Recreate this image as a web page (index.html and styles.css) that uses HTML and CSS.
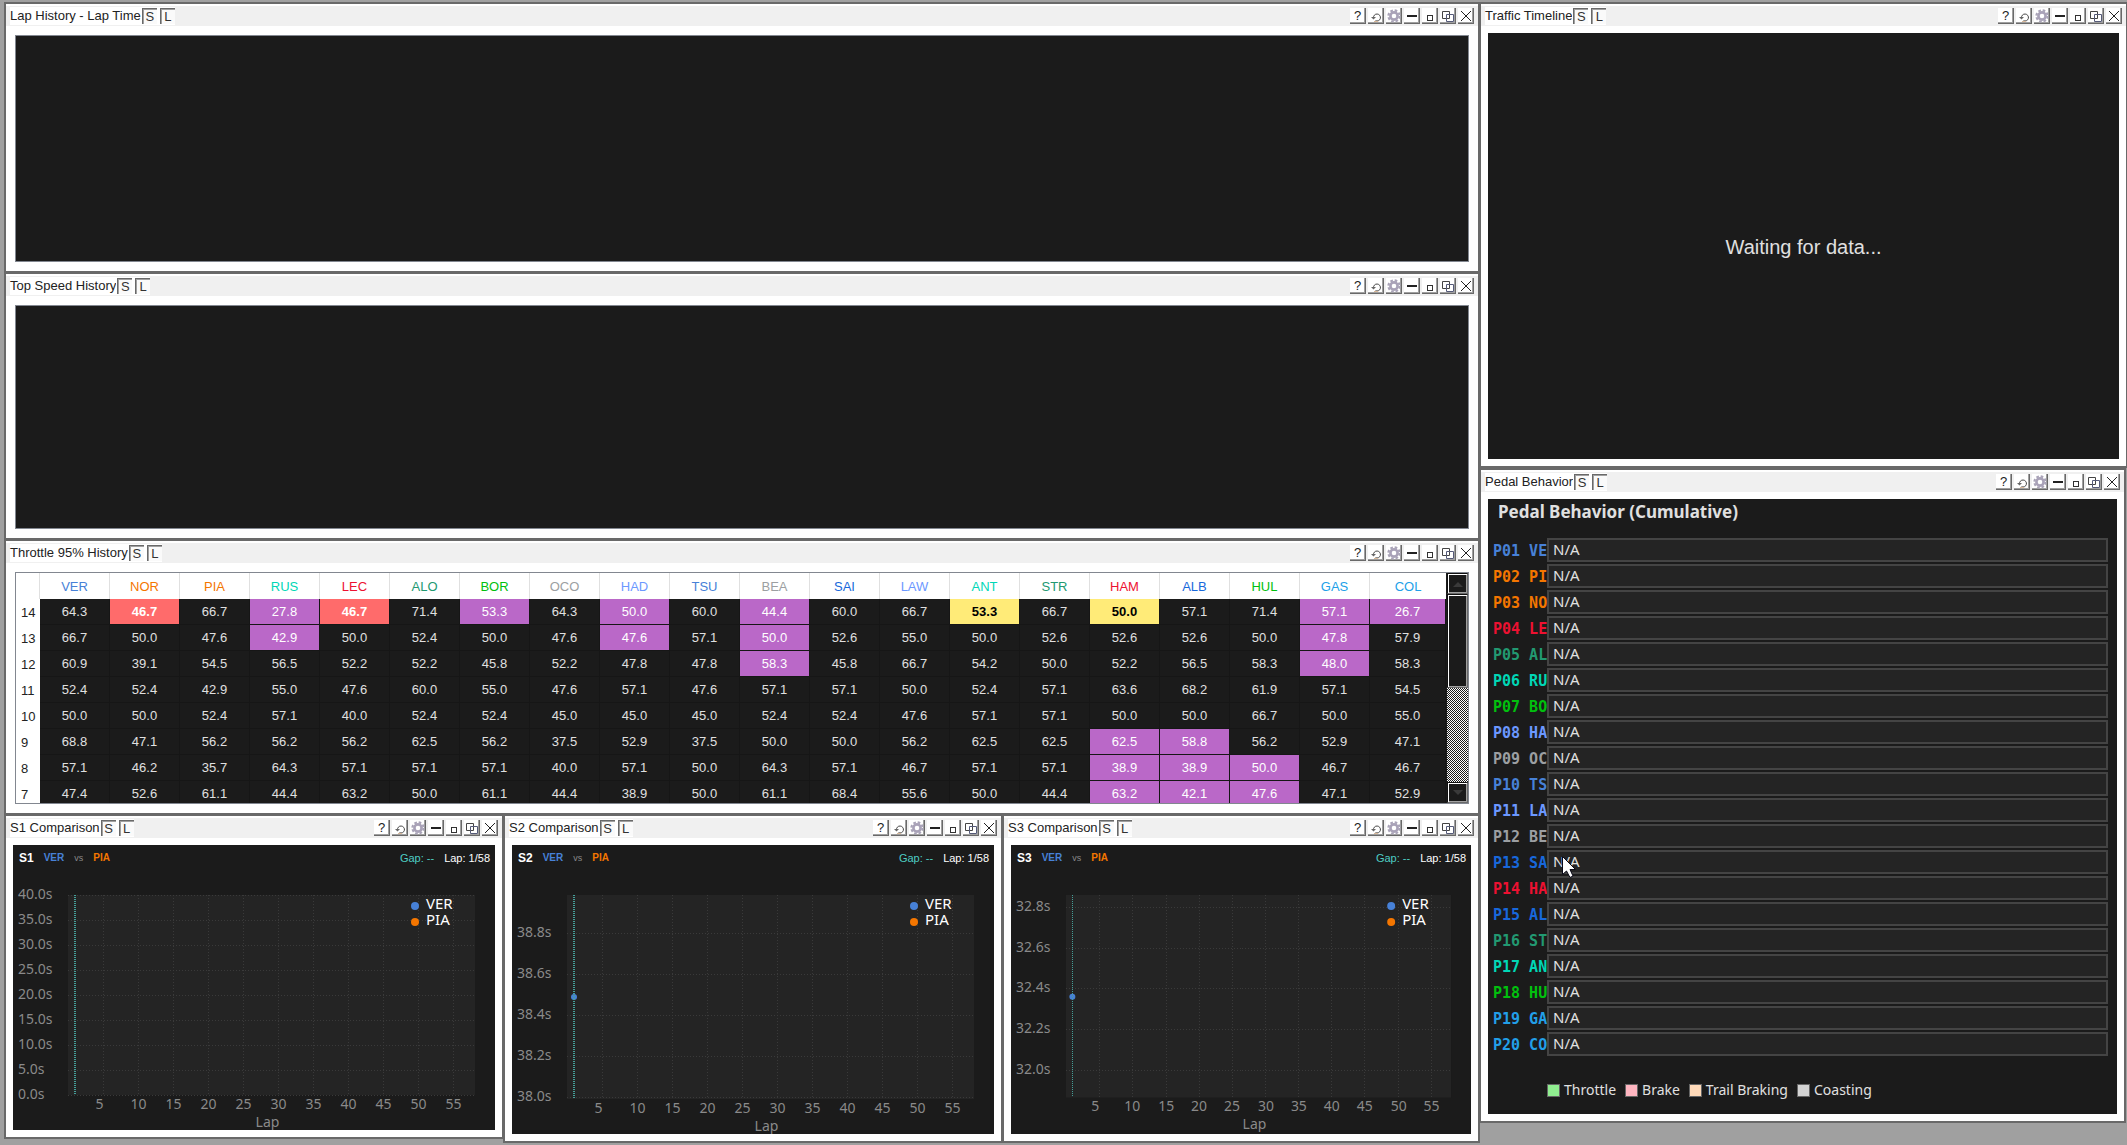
FILE: index.html
```html
<!DOCTYPE html>
<html lang="en">
<head>
<meta charset="utf-8">
<title>Race Telemetry Workspace</title>
<link rel="stylesheet" href="styles.css">
</head>
<body>
<svg class="sprite" aria-hidden="true">
  <symbol id="i-reset" viewBox="0 0 14 14"><path d="M4.500 9a3.500 3.500 0 1 1 2 2.700" fill="none" stroke="#444"/><path d="M2 8h5l-2.500 2.500z" fill="#666"/><path d="M5 12.500h4" stroke="#d8b89a"/></symbol>
  <symbol id="i-gear" viewBox="0 0 14 14"><circle cx="7" cy="7" r="3.600" fill="none" stroke="#a9a2b8" stroke-width="2.600"/><circle cx="7" cy="7" r="5.600" fill="none" stroke="#aaa4b8" stroke-width="2.200" stroke-dasharray="2.600 1.798"/></symbol>
  <symbol id="i-min" viewBox="0 0 14 14"><path d="M2 7h10" stroke="#222" stroke-width="2"/></symbol>
  <symbol id="i-max" viewBox="0 0 14 14"><rect x="4.500" y="6.500" width="5" height="5" fill="none" stroke="#333"/></symbol>
  <symbol id="i-float" viewBox="0 0 14 14"><path d="M1.500 2.500h7v7h-7z" fill="none" stroke="#444"/><path d="M5.500 5.500h7v7h-7z" fill="none" stroke="#555a78"/></symbol>
  <symbol id="i-close" viewBox="0 0 14 14"><path d="M2 2l10 10M12 2L2 12" stroke="#222" fill="none"/></symbol>
</svg>

<main class="desktop">
  <div class="column column-left">
    <section class="window">
      <header class="titlebar"><h2>Lap History - Lap Time</h2></header>
      <div class="pane pane-framed"></div>
    </section>
    <section class="window">
      <header class="titlebar"><h2>Top Speed History</h2></header>
      <div class="pane pane-framed"></div>
    </section>
    <section class="window">
      <header class="titlebar"><h2>Throttle 95% History</h2></header>
      <div class="pane pane-framed history">
        <div class="history-view"><table id="history"></table></div>
        <div class="scrollbar">
          <button type="button" class="sb-arrow" aria-label="Scroll up"><svg viewBox="0 0 10 6"><path d="M0 6l5-5 5 5z"/></svg></button>
          <div class="sb-thumb"></div>
          <div class="sb-track"></div>
          <button type="button" class="sb-arrow" aria-label="Scroll down"><svg viewBox="0 0 10 6"><path d="M0 0l5 5 5-5z"/></svg></button>
        </div>
      </div>
    </section>
    <div class="sectors">
      <section class="window window-short">
        <header class="titlebar"><h2>S1 Comparison</h2></header>
        <div class="pane chart" data-sector="S1"></div>
      </section>
      <section class="window">
        <header class="titlebar"><h2>S2 Comparison</h2></header>
        <div class="pane chart" data-sector="S2"></div>
      </section>
      <section class="window">
        <header class="titlebar"><h2>S3 Comparison</h2></header>
        <div class="pane chart" data-sector="S3"></div>
      </section>
    </div>
  </div>

  <div class="column column-right">
    <section class="window">
      <header class="titlebar"><h2>Traffic Timeline</h2></header>
      <div class="pane waiting"><p>Waiting for data...</p></div>
    </section>
    <section class="window window-narrow">
      <header class="titlebar"><h2>Pedal Behavior</h2></header>
      <div class="pane pedals">
        <h3>Pedal Behavior (Cumulative)</h3>
        <ol class="pedal-list" id="pedals"></ol>
        <ul class="pedal-legend">
          <li><span class="swatch throttle"></span>Throttle</li>
          <li><span class="swatch brake"></span>Brake</li>
          <li><span class="swatch trail"></span>Trail Braking</li>
          <li><span class="swatch coast"></span>Coasting</li>
        </ul>
      </div>
    </section>
  </div>
</main>
<script src="script.js"></script>
</body>
</html>
```
FILE: styles.css
```css
* { box-sizing: border-box; }

body {
  margin: 0;
  background: #a0a0a0;
  color: #222;
  font: 13px/18px "Liberation Sans", Arial, sans-serif;
}

h2, h3, p, ol, ul { margin: 0; padding: 0; font-weight: normal; list-style: none; }
button { padding: 0; margin: 0; font: inherit; color: inherit; border-radius: 0; }
.sprite { display: none; }

/* Workspace */
.desktop {
  display: grid;
  grid-template-columns: 1472fr 645fr;
  column-gap: 3px;
  height: 100vh;
  min-height: 900px;
  padding: 4px 1px 0 6px;
}
.column { display: grid; min-width: 0; min-height: 0; }
.column-left { grid-template-rows: 267fr 264fr 272fr 325fr; gap: 3px; padding-bottom: 4px; }
.column-right { grid-template-rows: 462fr 651fr; gap: 4px; padding-bottom: 24px; }
.sectors { display: grid; grid-template-columns: 496fr 496fr 474fr; gap: 3px; min-height: 0; }

.window {
  display: flex;
  flex-direction: column;
  min-width: 0;
  min-height: 0;
  padding-top: 2px;
  background: #fff;
  box-shadow: 0 0 0 2px #696969;
}
.window-short { margin-bottom: 4px; }
.window-narrow { margin-right: 2px; }

/* Title bar */
.titlebar {
  display: flex;
  align-items: center;
  flex: none;
  height: 20px;
  padding: 0 4px;
  background: #f0f0f0;
}
.titlebar h2 { font-size: 13px; line-height: 18px; background: #fff; }
.toggles { display: flex; gap: 3px; background: #fff; padding: 1px 0 1px 1px; }
.toggle {
  width: 15px;
  height: 16px;
  line-height: 15px;
  background: #fafafa;
  border: 0 solid #696969;
  border-width: 1px 0 0 1px;
  box-shadow: inset 1px 1px #a0a0a0;
  color: #333;
}
.tools { display: flex; gap: 2px; margin-left: auto; }
.tool {
  display: flex;
  align-items: center;
  justify-content: center;
  width: 16px;
  height: 16px;
  background: #fff;
  border: 0 solid #696969;
  border-width: 0 1px 1px 0;
  box-shadow: inset -1px -1px #a0a0a0;
}
.tool svg { width: 14px; height: 14px; }

/* Panes */
.pane { flex: 1; min-height: 0; margin: 7px; background: #1b1b1b; overflow: hidden; }
.pane-framed { margin: 9px; border: 1px solid #828790; }
.waiting { display: flex; align-items: center; justify-content: center; }
.waiting p { font-size: 20px; line-height: 24px; padding-top: 2px; color: #e0e0e0; }

/* Throttle history */
.history { display: flex; }
.history-view { flex: 1; overflow: hidden; border-right: 1px solid #1b1b1b; }
table { width: 100%; table-layout: fixed; border-collapse: separate; border-spacing: 0; }
th, td {
  height: 26px;
  padding: 0;
  text-align: center;
  font-weight: normal;
  line-height: 18px;
  border: 0 solid #161616;
  border-width: 0 1px 1px 0;
}
thead th { background: #fff; border-color: #e0e0e0; border-bottom: 0; width: 70px; padding-top: 2px; }
thead .corner { width: 24px; }
thead th:last-child { width: auto; border-right: 0; }
tbody th { background: #fff; text-align: left; padding: 2px 0 0 5px; border-color: #fff; }
td { color: #e0e0e0; }
td.best { background: #ba68c8; color: #fff; }
td.low { background: #ff6b6b; color: #fff; font-weight: bold; }
td.mid { background: #ffeb78; color: #000; font-weight: bold; }

.scrollbar { display: flex; flex-direction: column; width: 21px; background: #1b1b1b; }
.sb-arrow, .sb-thumb {
  flex: none;
  height: 21px;
  background: #1b1b1b;
  border: 1px solid;
  border-color: #111 #696969 #696969 #111;
  box-shadow: inset 1px 1px #fff, inset -1px -1px #a0a0a0;
}
.sb-arrow { display: flex; align-items: center; justify-content: center; }
.sb-arrow svg { width: 10px; height: 6px; fill: #3a3a3a; }
.sb-thumb { height: 94px; }
.sb-track {
  flex: 1;
  background: repeating-conic-gradient(#1b1b1b 0 25%, #fff 0 50%) 0 0 / 2px 2px;
}

/* Sector charts */
.chart { display: flex; flex-direction: column; }
.chart-head {
  display: flex;
  align-items: center;
  gap: 10px;
  flex: none;
  height: 25px;
  padding: 1px 5px 0 6px;
  font-size: 11px;
  color: #fff;
}
.chart-head .sector { font-size: 12px; font-weight: bold; }
.chart-head .driver { font-size: 10px; font-weight: bold; }
.chart-head .vs { font-size: 9px; color: #888; }
.chart-head .gap { margin-left: auto; color: #4ecdc4; }
.chart svg { display: block; width: 100%; min-height: 0; }
.chart text { font: 14px "Noto Sans", "Open Sans", sans-serif; fill: #8a8a8a; }
.chart text.key { font-size: 15px; fill: #fff; }
.x-tick, .x-title { text-anchor: middle; }
.plot { fill: #242424; }
.grid { stroke: #3a3a3a; stroke-dasharray: 1 2; shape-rendering: crispEdges; }
.lap-line { stroke: #45a099; stroke-dasharray: 1 1; shape-rendering: crispEdges; }

.ver, .tsu { color: #4781d7; fill: #4781d7; }
.nor, .pia { color: #f47600; fill: #f47600; }
.rus, .ant { color: #00d7b6; fill: #00d7b6; }
.lec, .ham { color: #ed1131; fill: #ed1131; }
.alo, .str { color: #229971; fill: #229971; }
.bor, .hul { color: #01c00e; fill: #01c00e; }
.oco, .bea { color: #9c9fa2; fill: #9c9fa2; }
.had, .law { color: #6c98ff; fill: #6c98ff; }
.sai, .alb { color: #1868db; fill: #1868db; }
.gas, .col { color: #229fe8; fill: #229fe8; }

/* Pedal behavior */
.pedals { color: #e0e0e0; font: 15px/19px "Noto Sans", "Open Sans", sans-serif; }
.pedals h3 { padding-left: 10px; margin-bottom: 13px; font-size: 17px; line-height: 26px; font-weight: bold; }
.pedal-list { display: grid; gap: 2px; padding: 0 9px 0 5px; }
.pedal-list li { display: flex; position: relative; }
.pedal-name {
  width: 54px;
  height: 24px;
  overflow: hidden;
  white-space: pre;
  font: bold 15px/26px "DejaVu Sans Mono", monospace;
}
.pedal-bar { flex: 1; height: 24px; padding-left: 4px; background: #242424; border: 2px solid #444; }
.pedal-legend { display: flex; gap: 9px; padding: 24px 0 0 59px; font-size: 14px; }
.pedal-legend li { display: flex; align-items: center; gap: 4px; }
.swatch { width: 13px; height: 13px; margin-top: 2px; border: 1px solid #666; }
.throttle { background: #90ee90; }
.brake { background: #ffb6c1; }
.trail { background: #ffdab9; }
.coast { background: #d3d3d3; }
.pointer { position: absolute; left: 69px; top: 6px; width: 15px; height: 22px; z-index: 1; }
```
FILE: script.js
```js
// Window controls, shared by every title bar
const icon = id => `<svg><use href="#i-${id}"/></svg>`;
const tools = [
  ["Help", "?"], ["Reset", icon("reset")], ["Settings", icon("gear")], ["Minimize", icon("min")],
  ["Maximize", icon("max")], ["Float", icon("float")], ["Close", icon("close")]
];
document.querySelectorAll(".titlebar").forEach(bar => {
  bar.insertAdjacentHTML("beforeend",
    `<div class="toggles"><button type="button" class="toggle">S</button><button type="button" class="toggle">L</button></div>
     <div class="tools">${tools.map(([n, c]) => `<button type="button" class="tool" aria-label="${n}">${c}</button>`).join("")}</div>`);
});

// Throttle history: p = best, r = low, y = mid
const drivers = "VER NOR PIA RUS LEC ALO BOR OCO HAD TSU BEA SAI LAW ANT STR HAM ALB HUL GAS COL".split(" ");
const laps = {
  14: "64.3 46.7r 66.7 27.8p 46.7r 71.4 53.3p 64.3 50.0p 60.0 44.4p 60.0 66.7 53.3y 66.7 50.0y 57.1 71.4 57.1p 26.7p",
  13: "66.7 50.0 47.6 42.9p 50.0 52.4 50.0 47.6 47.6p 57.1 50.0p 52.6 55.0 50.0 52.6 52.6 52.6 50.0 47.8p 57.9",
  12: "60.9 39.1 54.5 56.5 52.2 52.2 45.8 52.2 47.8 47.8 58.3p 45.8 66.7 54.2 50.0 52.2 56.5 58.3 48.0p 58.3",
  11: "52.4 52.4 42.9 55.0 47.6 60.0 55.0 47.6 57.1 47.6 57.1 57.1 50.0 52.4 57.1 63.6 68.2 61.9 57.1 54.5",
  10: "50.0 50.0 52.4 57.1 40.0 52.4 52.4 45.0 45.0 45.0 52.4 52.4 47.6 57.1 57.1 50.0 50.0 66.7 50.0 55.0",
  9: "68.8 47.1 56.2 56.2 56.2 62.5 56.2 37.5 52.9 37.5 50.0 50.0 56.2 62.5 62.5 62.5p 58.8p 56.2 52.9 47.1",
  8: "57.1 46.2 35.7 64.3 57.1 57.1 57.1 40.0 57.1 50.0 64.3 57.1 46.7 57.1 57.1 38.9p 38.9p 50.0p 46.7 46.7",
  7: "47.4 52.6 61.1 44.4 63.2 50.0 61.1 44.4 38.9 50.0 61.1 68.4 55.6 50.0 44.4 63.2p 42.1p 47.6p 47.1 52.9"
};
const marks = { p: "best", r: "low", y: "mid" };
document.getElementById("history").innerHTML =
  `<thead><tr><th class="corner"></th>${drivers.map(d => `<th scope="col" class="${d.toLowerCase()}">${d}</th>`).join("")}</tr></thead><tbody>` +
  Object.keys(laps).sort((a, b) => b - a).map(lap =>
    `<tr><th scope="row">${lap}</th>${laps[lap].split(" ").map(v => {
      const mark = marks[v[4]];
      return `<td${mark ? ` class="${mark}"` : ""}>${v.slice(0, 4)}</td>`;
    }).join("")}</tr>`).join("") + "</tbody>";

// Pedal behavior
const order = "VER PIA NOR LEC ALO RUS BOR HAD OCO TSU LAW BEA SAI HAM ALB STR ANT HUL GAS COL".split(" ");
const pointer = `<svg class="pointer" viewBox="0 0 15 22" aria-hidden="true"><path d="M.5 .5V18.500L4.500 15L8 21.500L11 20L8 13.500H13.500Z" fill="#fff" stroke="#0a0a18"/></svg>`;
document.getElementById("pedals").innerHTML = order.map((d, i) =>
  `<li><span class="pedal-name ${d.toLowerCase()}">P${String(i + 1).padStart(2, "0")} ${d.slice(0, 2)}</span><span class="pedal-bar">N/A</span>${d === "SAI" ? pointer : ""}</li>`).join("");

// Sector charts
const sectors = {
  S1: { w: 482, h: 285, bottom: 250, right: 462, x5: 90, step: 35, y0: 50, dy: 25, offset: 4,
        ticks: ["40.0s", "35.0s", "30.0s", "25.0s", "20.0s", "15.0s", "10.0s", "5.0s", "0.0s"], line: 2 },
  S2: { w: 482, h: 289, bottom: 254, right: 462, x5: 90, step: 35, y0: 88, dy: 41, offset: 4,
        ticks: ["38.8s", "38.6s", "38.4s", "38.2s", "38.0s"], line: 2, dot: 152 },
  S3: { w: 461, h: 288, bottom: 253, right: 441, x5: 88, step: 33.3, y0: 62, dy: 40.7, offset: 4,
        ticks: ["32.8s", "32.6s", "32.4s", "32.2s", "32.0s"], line: 1, dot: 152 }
};
document.querySelectorAll(".chart").forEach(el => {
  const name = el.dataset.sector, s = sectors[name];
  let g = `<rect class="plot" x="55" y="50" width="${s.right - 55}" height="${s.bottom - 50}"/>`;
  for (let i = 0; i < 11; i++) {
    const x = Math.round(s.x5 + i * s.step) + 0.5;
    g += `<path class="grid" d="M${x} 50V${s.bottom}"/><text class="x-tick" x="${x - (i ? 0 : 4)}" y="${s.bottom + 14}">${5 + i * 5}</text>`;
  }
  s.ticks.forEach((t, i) => {
    const y = Math.round(s.y0 + i * s.dy);
    g += `<path class="grid" d="M55 ${y + 0.5}H${s.right}"/><text x="5" y="${y + s.offset}">${t}</text>`;
  });
  const lx = s.line === 2 ? 62 : 61.5;
  if (s.dot) g += `<circle class="ver" cx="${lx}" cy="${s.dot}" r="3"/>`;
  g += `<path class="lap-line" stroke-width="${s.line}" d="M${lx} 50V${s.bottom}"/>`;
  const kx = s.right - 60;
  g += `<circle class="ver" cx="${kx}" cy="61" r="4"/><text class="key" x="${kx + 11}" y="64">VER</text>
        <circle class="pia" cx="${kx}" cy="77" r="4"/><text class="key" x="${kx + 11}" y="80">PIA</text>
        <text class="x-title" x="${(55 + s.right) / 2 - 4}" y="${s.bottom + 32}">Lap</text>`;
  el.innerHTML = `<div class="chart-head"><span class="sector">${name}</span><span class="driver ver">VER</span><span class="vs">vs</span><span class="driver pia">PIA</span><span class="gap">Gap: --</span><span>Lap: 1/58</span></div>
    <svg viewBox="0 25 ${s.w} ${s.h - 25}" role="img" aria-label="${name} sector times by lap">${g}</svg>`;
});
```
